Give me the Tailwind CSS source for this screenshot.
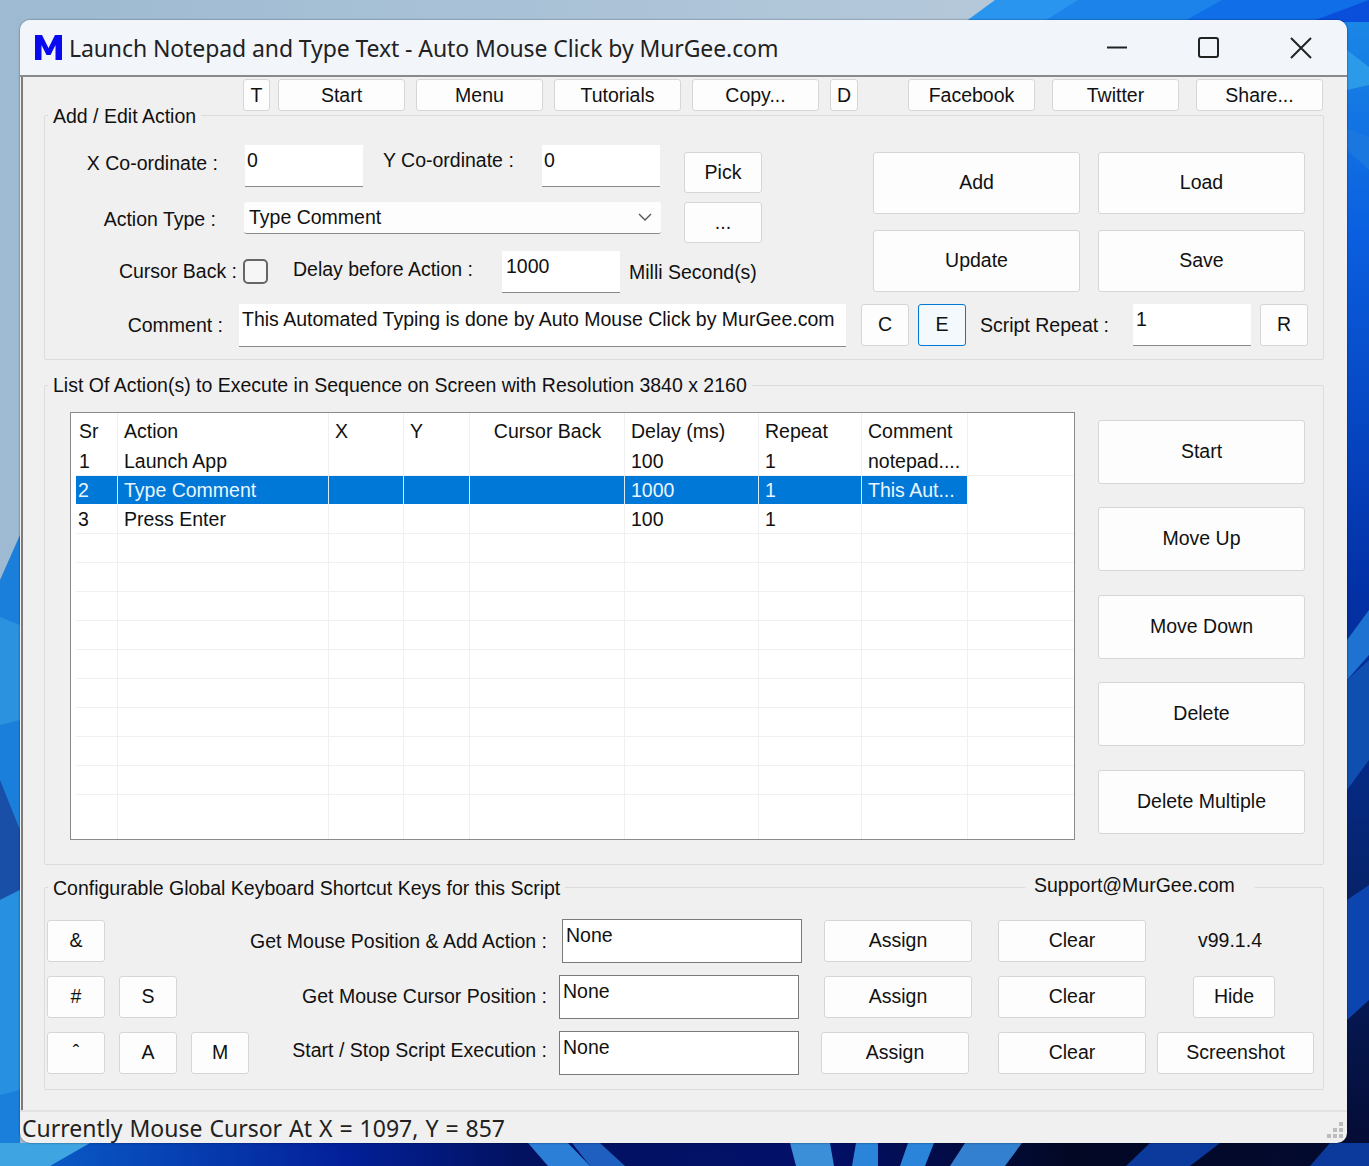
<!DOCTYPE html>
<html lang="en">
<head>
<meta charset="UTF-8">
<title>Auto Mouse Click</title>
<script src="https://cdn.jsdelivr.net/npm/@tailwindcss/browser@4"></script>
</head>
<body class="relative w-[1369px] h-[1166px] overflow-hidden bg-[#0a3fb0] font-['Liberation_Sans',Arial,sans-serif] text-[19.5px] text-[#111]">

<!-- wallpaper -->
<svg class="absolute inset-0" width="1369" height="1166" viewBox="0 0 1369 1166">
  <defs>
    <linearGradient id="sky" x1="0" x2="1" y1="0" y2="0"><stop offset="0" stop-color="#9dbad2"/><stop offset="0.7" stop-color="#b4c8da"/></linearGradient>
    <linearGradient id="right" x1="0" x2="0" y1="0" y2="1"><stop offset="0" stop-color="#1c8be6"/><stop offset="0.2" stop-color="#0a5fe0"/><stop offset="0.5" stop-color="#0331a8"/><stop offset="0.75" stop-color="#06246e"/><stop offset="1" stop-color="#050a30"/></linearGradient>
    <linearGradient id="bottom" x1="0" x2="1" y1="0" y2="0"><stop offset="0" stop-color="#0a63cc"/><stop offset="0.25" stop-color="#03209a"/><stop offset="0.38" stop-color="#021260"/><stop offset="0.6" stop-color="#03106a"/><stop offset="0.78" stop-color="#020824"/><stop offset="1" stop-color="#020a30"/></linearGradient>
  </defs>
  <rect width="1369" height="1166" fill="url(#sky)"/>
  <rect x="1330" width="39" height="1166" fill="url(#right)"/>
  <polygon points="995,0 1369,0 1369,22 965,22" fill="#2a95ee"/>
  <polygon points="1078,0 1369,0 1369,22 1043,22" fill="#1b83ea"/>
  <polygon points="1222,0 1369,0 1369,22 1183,22" fill="#0f6ee8"/>
  <polygon points="1310,22 1369,0 1369,22" fill="#0a4fdc"/>
  <polygon points="1347,50 1369,67 1369,85 1347,90" fill="#2b9ae8"/>
  <polygon points="1347,128 1369,137 1369,170 1347,150" fill="#1a77e0"/>
  <polygon points="1347,640 1369,610 1369,655 1347,680" fill="#1d72d2"/>
  <polygon points="1347,680 1369,660 1369,760 1347,790" fill="#0e4fb0"/>
  <polygon points="1347,900 1369,885 1369,1000 1347,1020" fill="#0d45b0"/>
  <polygon points="0,580 20,535 20,1166 0,1166" fill="#1a7fdb"/>
  <polygon points="0,617 20,625 20,720 0,725" fill="#2a92de"/>
  <polygon points="0,780 20,830 20,890 0,900" fill="#1a4fa8"/>
  <polygon points="0,900 20,890 20,1090 0,1095" fill="#2790e0"/>
  <rect y="1143" width="1369" height="23" fill="url(#bottom)"/>
  <polygon points="0,1143 90,1143 50,1166 0,1166" fill="#3fa5e2"/>
  <polygon points="528,1143 568,1143 590,1166 548,1166" fill="#2c7fd6"/>
  <polygon points="572,1143 600,1143 625,1166 590,1166" fill="#1f5fc0"/>
  <polygon points="790,1143 830,1143 834,1166 796,1166" fill="#3a8fd8"/>
  <polygon points="856,1143 878,1143 878,1166 852,1166" fill="#2a85da"/>
  <polygon points="908,1143 934,1143 925,1166 900,1166" fill="#2a85da"/>
  <polygon points="965,1143 1022,1143 1005,1166 950,1166" fill="#3280cf"/>
  <polygon points="1150,1143 1220,1143 1190,1166 1126,1166" fill="#0b3a9c"/>
  <polygon points="1330,1143 1369,1143 1369,1166 1310,1166" fill="#0b3a9c"/>
</svg>

<div class="relative ml-[20px] mt-[20px] w-[1327px] h-[1123px] flex flex-col rounded-[10px] overflow-hidden bg-[#f0f0f0] shadow-[0_0_2px_rgba(0,0,0,0.6)]">

  <!-- title bar -->
  <div class="h-[57px] shrink-0 flex items-center bg-[#f2f6fb] border-b-2 border-[#8a8a8a] font-['Noto_Sans',sans-serif] text-[23px] tracking-[-0.1px] text-[#222]">
    <span class="ml-[15px] w-[27px] h-[25px] mr-[7px]">
      <svg width="27" height="25" viewBox="0 0 27 25"><polygon points="0,0 7,0 13.5,13 20,0 27,0 27,25 20.5,25 20.5,10 15.5,20 11.5,20 6.5,10 6.5,25 0,25" fill="#0a0af0"/></svg>
    </span>
    <span class="mt-[2px]">Launch Notepad and Type Text - Auto Mouse Click by MurGee.com</span>
    <div class="ml-auto flex items-center">
      <svg width="22" height="22" viewBox="0 0 22 22" class="mr-[70px]"><path d="M1 10.5H21" stroke="#222" stroke-width="2"/></svg>
      <svg width="22" height="22" viewBox="0 0 22 22" class="mr-[70px]"><rect x="1" y="1" width="19" height="19" rx="2" fill="none" stroke="#222" stroke-width="2"/></svg>
      <svg width="22" height="22" viewBox="0 0 22 22" class="mr-[35px]"><path d="M1 1L21 21M21 1L1 21" stroke="#222" stroke-width="2"/></svg>
    </div>
  </div>

  <!-- client -->
  <div class="flex-1 min-h-0 ml-px border-l-2 border-[#7c7c7c] flex flex-col">

    <!-- toolbar -->
    <div class="h-[32px] mt-[2px] ml-[220px] flex shrink-0 text-center leading-[30px]">
      <button class="w-[27px] bg-[#fdfdfd] border border-[#d6d6d6] rounded-[3px] mr-[8px]">T</button>
      <button class="w-[127px] bg-[#fdfdfd] border border-[#d6d6d6] rounded-[3px] mr-[11px]">Start</button>
      <button class="w-[127px] bg-[#fdfdfd] border border-[#d6d6d6] rounded-[3px] mr-[11px]">Menu</button>
      <button class="w-[127px] bg-[#fdfdfd] border border-[#d6d6d6] rounded-[3px] mr-[11px]">Tutorials</button>
      <button class="w-[127px] bg-[#fdfdfd] border border-[#d6d6d6] rounded-[3px] mr-[11px]">Copy...</button>
      <button class="w-[28px] bg-[#fdfdfd] border border-[#d6d6d6] rounded-[3px] mr-[50px]">D</button>
      <button class="w-[127px] bg-[#fdfdfd] border border-[#d6d6d6] rounded-[3px] mr-[17px]">Facebook</button>
      <button class="w-[127px] bg-[#fdfdfd] border border-[#d6d6d6] rounded-[3px] mr-[17px]">Twitter</button>
      <button class="w-[127px] bg-[#fdfdfd] border border-[#d6d6d6] rounded-[3px]">Share...</button>
    </div>

    <!-- add / edit action -->
    <div class="relative shrink-0 w-[1280px] h-[245px] ml-[21px] mt-[4px] border border-[#dcdcdc] rounded-[2px]">
      <span class="absolute left-[3px] top-[-12px] px-[5px] bg-[#f0f0f0] leading-[24px]">Add / Edit Action</span>

      <div class="flex">
        <div class="w-[827px] shrink-0">
          <div class="flex h-[42px] mt-[29px]">
            <span class="w-[173px] text-right mt-[6px] leading-[24px] whitespace-nowrap">X Co-ordinate :</span>
            <div class="w-[118px] h-[42px] ml-[27px] bg-white border-b border-[#8a8a8a] pl-[2px] pt-[3px] leading-[24px]">0</div>
            <span class="ml-[20px] mt-[3px] leading-[24px] w-[131px] whitespace-nowrap">Y Co-ordinate :</span>
            <div class="w-[118px] h-[42px] ml-[28px] bg-white border-b border-[#8a8a8a] pl-[2px] pt-[3px] leading-[24px]">0</div>
            <button class="w-[78px] h-[41px] ml-[24px] mt-[7px] bg-[#fdfdfd] border border-[#d6d6d6] rounded-[3px]">Pick</button>
          </div>
          <div class="flex h-[41px] mt-[15px]">
            <span class="w-[171px] text-right mt-[5px] leading-[24px] whitespace-nowrap">Action Type :</span>
            <div class="w-[417px] h-[32px] ml-[28px] bg-[#fdfdfd] border-b border-[#8a8a8a] rounded-[3px] flex items-center pl-[5px] pb-[2px] leading-[24px]">
              Type Comment
              <svg width="14" height="8" viewBox="0 0 14 8" class="ml-auto mr-[9px]"><path d="M1 1L7 7L13 1" fill="none" stroke="#555" stroke-width="1.4"/></svg>
            </div>
            <button class="w-[78px] h-[41px] ml-[23px] bg-[#fdfdfd] border border-[#d6d6d6] rounded-[3px]">...</button>
          </div>
        </div>
        <div class="grid grid-cols-[207px_207px] gap-x-[18px] gap-y-[16px] ml-[1px] mt-[36px]">
          <button class="h-[62px] bg-[#fdfdfd] border border-[#d6d6d6] rounded-[3px]">Add</button>
          <button class="h-[62px] bg-[#fdfdfd] border border-[#d6d6d6] rounded-[3px]">Load</button>
          <button class="h-[62px] bg-[#fdfdfd] border border-[#d6d6d6] rounded-[3px]">Update</button>
          <button class="h-[62px] bg-[#fdfdfd] border border-[#d6d6d6] rounded-[3px]">Save</button>
        </div>
      </div>

      <div class="absolute left-0 top-[135px] flex h-[42px]">
        <span class="w-[192px] text-right mt-[8px] leading-[24px] whitespace-nowrap">Cursor Back :</span>
        <span class="w-[25px] h-[25px] ml-[6px] mt-[8px] bg-[#f6f6f6] border-2 border-[#666] rounded-[5px]"></span>
        <span class="ml-[25px] mt-[6px] leading-[24px] w-[180px] whitespace-nowrap">Delay before Action :</span>
        <div class="w-[118px] h-[42px] ml-[29px] bg-white border-b border-[#8a8a8a] pl-[4px] pt-[3px] leading-[24px]">1000</div>
        <span class="ml-[9px] mt-[9px] leading-[24px] whitespace-nowrap">Milli Second(s)</span>
      </div>

      <div class="absolute left-0 top-[188px] flex h-[43px]">
        <span class="w-[178px] text-right mt-[9px] leading-[24px] whitespace-nowrap">Comment :</span>
        <div class="w-[607px] h-[43px] ml-[16px] bg-white border-b border-[#8a8a8a] pl-[3px] pt-[3px] leading-[24px] whitespace-nowrap">This Automated Typing is done by Auto Mouse Click by MurGee.com</div>
        <button class="w-[48px] h-[42px] ml-[15px] bg-[#fdfdfd] border border-[#d6d6d6] rounded-[3px]">C</button>
        <button class="w-[48px] h-[42px] ml-[9px] bg-[#f4f9fd] border border-[#0078d7] rounded-[3px]">E</button>
        <span class="ml-[14px] mt-[9px] leading-[24px] w-[127px] whitespace-nowrap">Script Repeat :</span>
        <div class="w-[118px] h-[42px] ml-[26px] bg-white border-b border-[#8a8a8a] pl-[3px] pt-[3px] leading-[24px]">1</div>
        <button class="w-[48px] h-[42px] ml-[9px] bg-[#fdfdfd] border border-[#d6d6d6] rounded-[3px]">R</button>
      </div>
    </div>

    <!-- list of actions -->
    <div class="relative shrink-0 w-[1280px] h-[480px] ml-[21px] mt-[25px] border border-[#dcdcdc] rounded-[2px] flex">
      <span class="absolute left-[3px] top-[-13px] px-[5px] bg-[#f0f0f0] leading-[24px] whitespace-nowrap">List Of Action(s) to Execute in Sequence on Screen with Resolution 3840 x 2160</span>

      <div class="w-[1005px] h-[428px] ml-[25px] mt-[26px] bg-white border border-[#8a8a8a] flex flex-col overflow-hidden pl-[5px] bg-[linear-gradient(to_right,transparent_46px,#f0f0f0_46px,#f0f0f0_47px,transparent_47px,transparent_257px,#f0f0f0_257px,#f0f0f0_258px,transparent_258px,transparent_332px,#f0f0f0_332px,#f0f0f0_333px,transparent_333px,transparent_398px,#f0f0f0_398px,#f0f0f0_399px,transparent_399px,transparent_553px,#f0f0f0_553px,#f0f0f0_554px,transparent_554px,transparent_687px,#f0f0f0_687px,#f0f0f0_688px,transparent_688px,transparent_790px,#f0f0f0_790px,#f0f0f0_791px,transparent_791px,transparent_896px,#f0f0f0_896px,#f0f0f0_897px,transparent_897px)]">
        <div class="grid grid-cols-[42px_211px_75px_66px_155px_134px_103px_106px] h-[33px] pt-[2px] items-center leading-[24px]">
          <span class="pl-[3px]">Sr</span><span class="pl-[6px]">Action</span><span class="pl-[6px]">X</span><span class="pl-[6px]">Y</span><span class="text-center">Cursor Back</span><span class="pl-[6px]">Delay (ms)</span><span class="pl-[6px]">Repeat</span><span class="pl-[6px]">Comment</span>
        </div>
        <div class="grid grid-cols-[42px_211px_75px_66px_155px_134px_103px_106px] h-[30px] pt-[1px] items-center leading-[24px] border-b border-[#f0f0f0]">
          <span class="pl-[3px]">1</span><span class="pl-[6px]">Launch App</span><span></span><span></span><span></span><span class="pl-[6px]">100</span><span class="pl-[6px]">1</span><span class="pl-[6px] whitespace-nowrap">notepad....</span>
        </div>
        <div class="grid grid-cols-[42px_211px_75px_66px_155px_134px_103px_106px] w-[891px] h-[28px] leading-[29px] bg-[#0078d7] text-[#e9f6ff] [&>span]:h-full [&>span]:border-r [&>span]:border-[#d9ecfa]">
          <span class="pl-[2px]">2</span><span class="pl-[6px]">Type Comment</span><span></span><span></span><span></span><span class="pl-[6px]">1000</span><span class="pl-[6px]">1</span><span class="pl-[6px] whitespace-nowrap !border-r-0">This Aut...</span>
        </div>
        <div class="grid grid-cols-[42px_211px_75px_66px_155px_134px_103px_106px] h-[30px] pt-[1px] items-center leading-[24px] border-b border-[#f0f0f0]">
          <span class="pl-[2px]">3</span><span class="pl-[6px]">Press Enter</span><span></span><span></span><span></span><span class="pl-[6px]">100</span><span class="pl-[6px]">1</span><span></span>
        </div>
        <div class="h-[29px] border-b border-[#f0f0f0]"></div>
        <div class="h-[29px] border-b border-[#f0f0f0]"></div>
        <div class="h-[29px] border-b border-[#f0f0f0]"></div>
        <div class="h-[29px] border-b border-[#f0f0f0]"></div>
        <div class="h-[29px] border-b border-[#f0f0f0]"></div>
        <div class="h-[29px] border-b border-[#f0f0f0]"></div>
        <div class="h-[29px] border-b border-[#f0f0f0]"></div>
        <div class="h-[29px] border-b border-[#f0f0f0]"></div>
        <div class="h-[29px] border-b border-[#f0f0f0]"></div>
      </div>

      <div class="flex flex-col ml-[23px] mt-[34px]">
        <button class="w-[207px] h-[64px] bg-[#fdfdfd] border border-[#d6d6d6] rounded-[3px]">Start</button>
        <button class="w-[207px] h-[64px] mt-[23px] bg-[#fdfdfd] border border-[#d6d6d6] rounded-[3px]">Move Up</button>
        <button class="w-[207px] h-[64px] mt-[24px] bg-[#fdfdfd] border border-[#d6d6d6] rounded-[3px]">Move Down</button>
        <button class="w-[207px] h-[64px] mt-[23px] bg-[#fdfdfd] border border-[#d6d6d6] rounded-[3px]">Delete</button>
        <button class="w-[207px] h-[64px] mt-[24px] bg-[#fdfdfd] border border-[#d6d6d6] rounded-[3px]">Delete Multiple</button>
      </div>
    </div>

    <!-- shortcut keys -->
    <div class="relative shrink-0 w-[1280px] h-[203px] ml-[21px] mt-[22px] border border-[#dcdcdc] rounded-[2px] flex flex-col">
      <span class="absolute left-[3px] top-[-12px] px-[5px] bg-[#f0f0f0] leading-[24px] whitespace-nowrap">Configurable Global Keyboard Shortcut Keys for this Script</span>
      <span class="absolute left-[980px] top-[-15px] w-[230px] pl-[9px] bg-[#f0f0f0] leading-[24px] whitespace-nowrap">Support@MurGee.com</span>

      <div class="flex h-[44px] mt-[31px] ml-[2px]">
        <button class="w-[58px] h-[42px] mt-px bg-[#fdfdfd] border border-[#d6d6d6] rounded-[3px]">&amp;</button>
        <span class="w-[442px] text-right mt-[10px] leading-[24px] whitespace-nowrap">Get Mouse Position &amp; Add Action :</span>
        <div class="w-[240px] h-[44px] ml-[15px] bg-white border border-[#7a7a7a] pl-[3px] pt-[3px] leading-[24px]">None</div>
        <button class="w-[148px] h-[42px] ml-[22px] mt-px bg-[#fdfdfd] border border-[#d6d6d6] rounded-[3px]">Assign</button>
        <button class="w-[148px] h-[42px] ml-[26px] mt-px bg-[#fdfdfd] border border-[#d6d6d6] rounded-[3px]">Clear</button>
        <span class="w-[168px] text-center mt-[9px] leading-[24px]">v99.1.4</span>
      </div>

      <div class="flex h-[44px] mt-[12px] ml-[2px]">
        <button class="w-[58px] h-[42px] mt-px bg-[#fdfdfd] border border-[#d6d6d6] rounded-[3px]">#</button>
        <button class="w-[58px] h-[42px] mt-px ml-[14px] bg-[#fdfdfd] border border-[#d6d6d6] rounded-[3px]">S</button>
        <span class="w-[370px] text-right mt-[9px] leading-[24px] whitespace-nowrap">Get Mouse Cursor Position :</span>
        <div class="w-[240px] h-[44px] ml-[12px] bg-white border border-[#7a7a7a] pl-[3px] pt-[3px] leading-[24px]">None</div>
        <button class="w-[148px] h-[42px] ml-[25px] mt-px bg-[#fdfdfd] border border-[#d6d6d6] rounded-[3px]">Assign</button>
        <button class="w-[148px] h-[42px] ml-[26px] mt-px bg-[#fdfdfd] border border-[#d6d6d6] rounded-[3px]">Clear</button>
        <button class="w-[82px] h-[42px] ml-[47px] mt-px bg-[#fdfdfd] border border-[#d6d6d6] rounded-[3px]">Hide</button>
      </div>

      <div class="flex h-[44px] mt-[12px] ml-[2px]">
        <button class="w-[58px] h-[42px] mt-px bg-[#fdfdfd] border border-[#d6d6d6] rounded-[3px]">ˆ</button>
        <button class="w-[58px] h-[42px] mt-px ml-[14px] bg-[#fdfdfd] border border-[#d6d6d6] rounded-[3px]">A</button>
        <button class="w-[58px] h-[42px] mt-px ml-[14px] bg-[#fdfdfd] border border-[#d6d6d6] rounded-[3px]">M</button>
        <span class="w-[298px] text-right mt-[7px] leading-[24px] whitespace-nowrap">Start / Stop Script Execution :</span>
        <div class="w-[240px] h-[44px] ml-[12px] bg-white border border-[#7a7a7a] pl-[3px] pt-[3px] leading-[24px]">None</div>
        <button class="w-[148px] h-[42px] ml-[22px] mt-px bg-[#fdfdfd] border border-[#d6d6d6] rounded-[3px]">Assign</button>
        <button class="w-[148px] h-[42px] ml-[29px] mt-px bg-[#fdfdfd] border border-[#d6d6d6] rounded-[3px]">Clear</button>
        <button class="w-[157px] h-[42px] ml-[11px] mt-px bg-[#fdfdfd] border border-[#d6d6d6] rounded-[3px]">Screenshot</button>
      </div>
    </div>
  </div>

  <!-- status bar -->
  <div class="relative h-[33px] shrink-0 border-t-2 border-[#e2e2e2] pl-[2px] font-['Noto_Sans',sans-serif] text-[23px] [word-spacing:1px] leading-[33px] text-[#222]">
    Currently Mouse Cursor At X = 1097, Y = 857
    <svg class="absolute right-[3px] bottom-[3px]" width="18" height="18" viewBox="0 0 18 18" fill="#bdbdbd"><rect x="13" y="0" width="4" height="4"/><rect x="7" y="6" width="4" height="4"/><rect x="13" y="6" width="4" height="4"/><rect x="1" y="12" width="4" height="4"/><rect x="7" y="12" width="4" height="4"/><rect x="13" y="12" width="4" height="4"/></svg>
  </div>
</div>
</body>
</html>
